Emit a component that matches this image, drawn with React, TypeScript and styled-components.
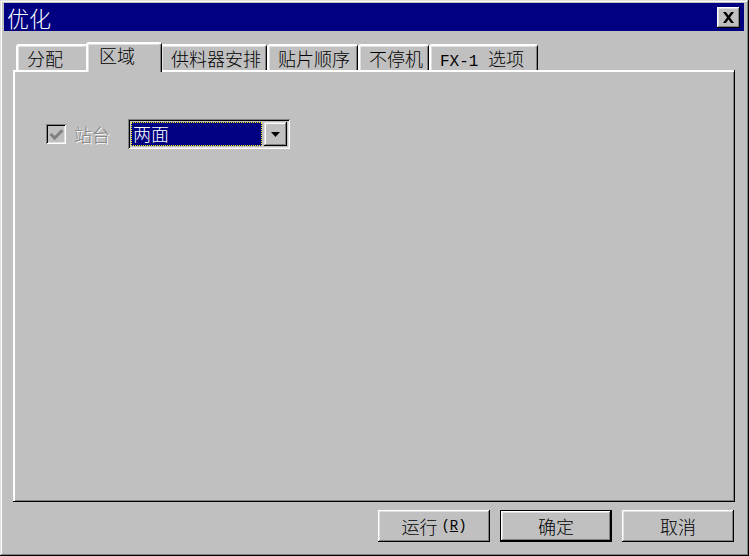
import React from 'react'
import styled, { createGlobalStyle } from 'styled-components'

const FACE = '#c0c0c0'
const CJK = `"Noto Sans CJK SC", "Noto Sans", sans-serif`

const GlobalStyle = createGlobalStyle`
  html, body {
    margin: 0;
    padding: 0;
    background: ${FACE};
  }
  body {
    font-family: ${CJK};
    font-weight: 300;
  }
`

const tabs = [
  { label: '分配', width: 72 },
  { label: '区域', width: 72 },
  { label: '供料器安排', width: 107 },
  { label: '贴片顺序', width: 91 },
  { label: '不停机', width: 71 },
  { label: 'FX-1 选项', width: 109, mono: 'FX-1 ', rest: '选项' },
]

const App: React.FC = () => {
  const active = 1

  return (
    <>
      <GlobalStyle />
      <StyledWindow>
        <StyledTitleBar>
          <StyledTitle>优化</StyledTitle>
          <StyledCloseButton>
            <svg width="13" height="11" viewBox="0 0 13 11">
              <path d="M1 0h3l2.5 3.5L9 0h3L8 5.5 12 11H9L6.5 7.5 4 11H1l4-5.5z" fill="#000" />
            </svg>
          </StyledCloseButton>
        </StyledTitleBar>
        <StyledBody>
          <StyledTabRow>
            {tabs.map((t, i) => (
              <StyledTab key={t.label} $w={t.width} $active={i === active}>
                {t.mono ? (
                  <>
                    <StyledMono>{t.mono}</StyledMono>
                    {t.rest}
                  </>
                ) : (
                  t.label
                )}
              </StyledTab>
            ))}
          </StyledTabRow>
          <StyledPanel>
            <StyledFieldRow>
              <StyledCheckbox>
                <svg width="15" height="15" viewBox="0 0 14 14">
                  <path d="M1.5 6.5l3.8 3.8L12.5 3" fill="none" stroke="#808080" strokeWidth="2.8" />
                </svg>
              </StyledCheckbox>
              <StyledDisabledLabel>站台</StyledDisabledLabel>
              <StyledCombo>
                <StyledComboValue>两面</StyledComboValue>
                <StyledComboArrow>
                  <svg width="9" height="5" viewBox="0 0 9 5">
                    <path d="M0 0h9L4.5 5z" fill="#000" />
                  </svg>
                </StyledComboArrow>
              </StyledCombo>
            </StyledFieldRow>
          </StyledPanel>
          <StyledActions>
            <StyledButton>
              运行
              <StyledAccelText $gap>(</StyledAccelText>
              <StyledAccelText $underline>R</StyledAccelText>
              <StyledAccelText>)</StyledAccelText>
            </StyledButton>
            <StyledButton $default>确定</StyledButton>
            <StyledButton>取消</StyledButton>
          </StyledActions>
        </StyledBody>
      </StyledWindow>
    </>
  )
}

const StyledWindow = styled.div`
  box-sizing: border-box;
  width: 749px;
  height: 556px;
  padding: 3px 5px 3px 4px;
  background: ${FACE};
  display: flex;
  flex-direction: column;
  box-shadow:
    inset -1px -1px #000,
    inset 1px 1px #dfdfdf,
    inset -2px -2px #808080,
    inset 2px 2px #fff;
`

const StyledTitleBar = styled.div`
  height: 28px;
  background: #000080;
  display: flex;
  align-items: center;
  justify-content: space-between;
  padding: 0 4px 0 3px;
`

const StyledTitle = styled.span`
  color: #fff;
  font-size: 22px;
  line-height: 28px;
`

const StyledCloseButton = styled.div`
  box-sizing: border-box;
  width: 23px;
  height: 21px;
  background: ${FACE};
  display: flex;
  align-items: center;
  justify-content: center;
  box-shadow:
    inset -1px -1px #000,
    inset 1px 1px #fff,
    inset -2px -2px #808080,
    inset 2px 2px #dfdfdf;
`

const StyledBody = styled.div`
  flex: 1;
  display: flex;
  flex-direction: column;
  padding: 11px 9px 0 9px;
`

const StyledTabRow = styled.div`
  display: flex;
  align-items: flex-end;
  height: 28px;
  padding-left: 3px;
`

const StyledTab = styled.div<{ $w: number; $active?: boolean }>`
  box-sizing: border-box;
  position: relative;
  width: ${(p) => (p.$active ? p.$w + 4 : p.$w)}px;
  height: ${(p) => (p.$active ? 30 : 26)}px;
  margin: ${(p) => (p.$active ? '0 -2px -2px -2px' : '0')};
  z-index: ${(p) => (p.$active ? 1 : 0)};
  padding: ${(p) => (p.$active ? '1px 0 0 11px' : '2px 0 0 9px')};
  background: ${FACE};
  border-top: 2px solid #fff;
  border-left: 2px solid #fff;
  border-right: 1px solid #000;
  border-top-left-radius: 3px;
  border-top-right-radius: 3px;
  box-shadow: inset -1px 0 #808080, inset 1px 1px #dfdfdf;
  font-size: 18px;
  line-height: 20px;
  color: #000;
  white-space: nowrap;
`

const StyledMono = styled.span`
  font-family: "Liberation Mono", monospace;
  font-size: 16px;
`

const StyledPanel = styled.div`
  box-sizing: border-box;
  height: 432px;
  background: ${FACE};
  padding: 49px 0 0 33px;
  box-shadow:
    inset -1px -1px #000,
    inset 2px 2px #fff,
    inset -2px -2px #808080;
`

const StyledFieldRow = styled.div`
  display: flex;
  align-items: center;
`

const StyledCheckbox = styled.div`
  box-sizing: border-box;
  width: 20px;
  height: 20px;
  display: flex;
  align-items: center;
  justify-content: center;
  background: ${FACE};
  box-shadow:
    inset 1px 1px #808080,
    inset -1px -1px #fff,
    inset 2px 2px #000,
    inset -2px -2px #dfdfdf;
`

const StyledDisabledLabel = styled.span`
  margin-left: 8px;
  font-size: 18px;
  line-height: 20px;
  color: #808080;
  text-shadow: 1px 1px #fff;
`

const StyledCombo = styled.div`
  box-sizing: border-box;
  margin-left: 18px;
  width: 162px;
  height: 30px;
  padding: 3px;
  display: flex;
  align-items: stretch;
  gap: 2px;
  background: ${FACE};
  box-shadow:
    inset 1px 1px #808080,
    inset -1px -1px #fff,
    inset 2px 2px #000,
    inset -2px -2px #dfdfdf;
`

const StyledComboValue = styled.div`
  box-sizing: border-box;
  flex: 1;
  background: #000080;
  color: #fff;
  font-size: 18px;
  line-height: 22px;
  padding-left: 2px;
  outline: 1px dotted #ffff00;
  outline-offset: -1px;
`

const StyledComboArrow = styled.div`
  box-sizing: border-box;
  width: 23px;
  display: flex;
  align-items: center;
  justify-content: center;
  box-shadow:
    inset -1px -1px #000,
    inset 1px 1px #dfdfdf,
    inset -2px -2px #808080,
    inset 2px 2px #fff;
`

const StyledActions = styled.div`
  display: flex;
  justify-content: flex-end;
  gap: 10px;
  margin-top: 8px;
  padding-right: 1px;
`

const StyledButton = styled.div<{ $default?: boolean }>`
  box-sizing: border-box;
  width: 112px;
  height: 32px;
  display: flex;
  align-items: center;
  justify-content: center;
  background: ${FACE};
  font-size: 18px;
  color: #000;
  border: ${(p) => (p.$default ? '1px solid #000' : '0')};
  box-shadow:
    inset -1px -1px #000,
    inset 1px 1px #fff,
    inset -2px -2px #808080,
    inset 2px 2px #dfdfdf;
`

const StyledAccelText = styled.span<{ $gap?: boolean; $underline?: boolean }>`
  font-family: "Liberation Mono", monospace;
  font-size: 14px;
  margin-left: ${(p) => (p.$gap ? 4 : 0)}px;
  text-decoration: ${(p) => (p.$underline ? 'underline' : 'none')};
`

export default App
